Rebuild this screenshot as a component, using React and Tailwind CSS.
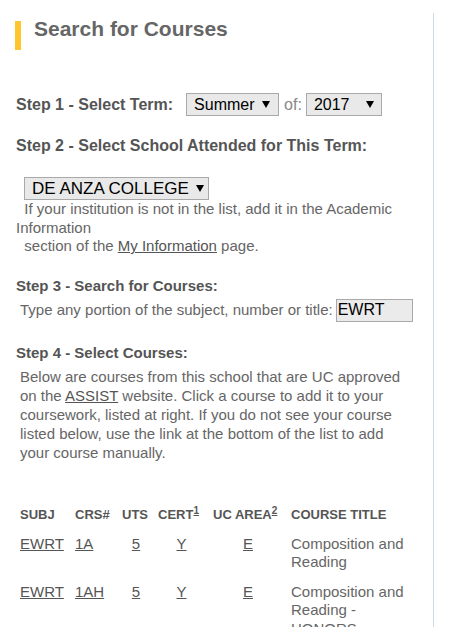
import React from "react";

function Tri() {
  return (
    <svg width="8" height="7" viewBox="0 0 8 7" className="shrink-0">
      <polygon points="0,0 8,0 4,7" fill="#000" />
    </svg>
  );
}

function FakeSelect({ label, className }) {
  return (
    <div
      className={
        "flex shrink-0 items-center justify-between h-[23px] border border-[#a9a9a9] bg-[#e9e9e9] leading-[20px] text-black whitespace-nowrap " +
        className
      }
    >
      <span>{label}</span>
      <Tri />
    </div>
  );
}

const rows = [
  { subj: "EWRT", crs: "1A", uts: "5", cert: "Y", area: "E", title: "Composition and Reading" },
  { subj: "EWRT", crs: "1AH", uts: "5", cert: "Y", area: "E", title: "Composition and Reading - HONORS" },
  { subj: "EWRT", crs: "1B", uts: "5", cert: "Y", area: "E", title: "Reading, Writing, and Research" },
];

export default function App() {
  return (
    <div className="flex min-h-[627px] bg-white font-['Liberation_Sans',Arial,sans-serif]">
      <div className="mt-[13px] w-[434px] shrink-0 border-r border-[#c8dce8] min-h-[614px] pt-[4px]">
        {/* Title */}
        <div className="flex items-start h-[33px]">
          <div className="ml-[15px] mt-[4px] h-[29px] w-[6px] bg-[#fec52e]" />
          <h1 className="ml-[13px] text-[21px] leading-[24px] font-bold text-[#666]">
            Search for Courses
          </h1>
        </div>

        <div className="pl-[16px] pr-[22px]">
          {/* Step 1 */}
          <div className="mt-[43px] flex items-center h-[23px]">
            <span className="text-[16px] leading-[20px] font-bold text-[#555] whitespace-nowrap">
              Step 1 - Select Term:
            </span>
            <FakeSelect label="Summer" className="ml-[13px] w-[93px] pl-[7px] pr-[8px] text-[16px]" />
            <span className="ml-[5px] mr-[4px] text-[16px] leading-[20px] text-[#888]">of:</span>
            <FakeSelect label="2017" className="w-[76px] pl-[7px] pr-[7px] text-[16px]" />
          </div>

          {/* Step 2 */}
          <div className="mt-[20px] text-[16px] leading-[20px] font-bold text-[#555]">
            Step 2 - Select School Attended for This Term:
          </div>
          <FakeSelect
            label="DE ANZA COLLEGE"
            className="mt-[21px] ml-[8px] w-[185px] pl-[7px] pr-[4px] text-[17px]"
          />
          <p className="text-[15px] leading-[18.5px] text-[#666]">
            {"\u00a0\u00a0"}If your institution is not in the list, add it in the Academic Information
            <br />
            {"\u00a0\u00a0"}section of the <a className="underline text-[#555]">My Information</a> page.
          </p>

          {/* Step 3 */}
          <div className="mt-[20px] text-[15px] leading-[19px] font-bold text-[#555]">
            Step 3 - Search for Courses:
          </div>
          <div className="mt-[4px] flex items-center h-[23px] text-[15px] text-[#666]">
            <span className="pl-[4px] whitespace-nowrap shrink-0">
              Type any portion of the subject, number or title:
            </span>
            <div className="ml-[3px] shrink-0 flex items-center h-[23px] w-[77px] border border-[#a9a9a9] bg-[#ebebeb] pl-[1px] text-[16px] text-black">
              EWRT
            </div>
          </div>

          {/* Step 4 */}
          <div className="mt-[21px] text-[15px] leading-[19px] font-bold text-[#555]">
            Step 4 - Select Courses:
          </div>
          <p className="mt-[5px] pl-[4px] text-[15px] leading-[19px] text-[#666]">
            Below are courses from this school that are UC approved on the{" "}
            <a className="underline text-[#555]">ASSIST</a> website. Click a course to add it to your
            coursework, listed at right. If you do not see your course listed below, use the link at
            the bottom of the list to add your course manually.
          </p>

          {/* Table */}
          <table className="mt-[39px] w-[395px] table-fixed border-collapse">
            <colgroup>
              <col className="w-[55px]" />
              <col className="w-[47px]" />
              <col className="w-[36px]" />
              <col className="w-[55px]" />
              <col className="w-[78px]" />
              <col className="w-[124px]" />
            </colgroup>
            <thead>
              <tr className="text-[13px] leading-[16px] font-bold text-[#555] text-left">
                <th className="px-[4px] py-[6px] whitespace-nowrap">SUBJ</th>
                <th className="px-[4px] py-[6px] whitespace-nowrap">CRS#</th>
                <th className="px-[4px] py-[6px] whitespace-nowrap">UTS</th>
                <th className="px-[4px] py-[6px] whitespace-nowrap">
                  CERT<sup className="underline text-[10px]">1</sup>
                </th>
                <th className="px-[4px] py-[6px] whitespace-nowrap">
                  UC AREA<sup className="underline text-[10px]">2</sup>
                </th>
                <th className="px-[4px] py-[6px] whitespace-nowrap">COURSE TITLE</th>
              </tr>
            </thead>
            <tbody>
              {rows.map((r, i) => (
                <tr key={i} className="text-[15px] leading-[18.5px] text-[#555] align-top">
                  <td className="px-[4px] pt-[6px] pb-[5px]">
                    <a className="underline">{r.subj}</a>
                  </td>
                  <td className="px-[4px] pt-[6px] pb-[5px]">
                    <a className="underline">{r.crs}</a>
                  </td>
                  <td className="px-[4px] pt-[6px] pb-[5px] text-center">
                    <a className="underline">{r.uts}</a>
                  </td>
                  <td className="px-[4px] pt-[6px] pb-[5px] text-center">
                    <a className="underline">{r.cert}</a>
                  </td>
                  <td className="px-[4px] pt-[6px] pb-[5px] text-center">
                    <a className="underline">{r.area}</a>
                  </td>
                  <td className="px-[4px] pt-[6px] pb-[5px] text-[#666]">{r.title}</td>
                </tr>
              ))}
            </tbody>
          </table>
        </div>
      </div>
    </div>
  );
}
